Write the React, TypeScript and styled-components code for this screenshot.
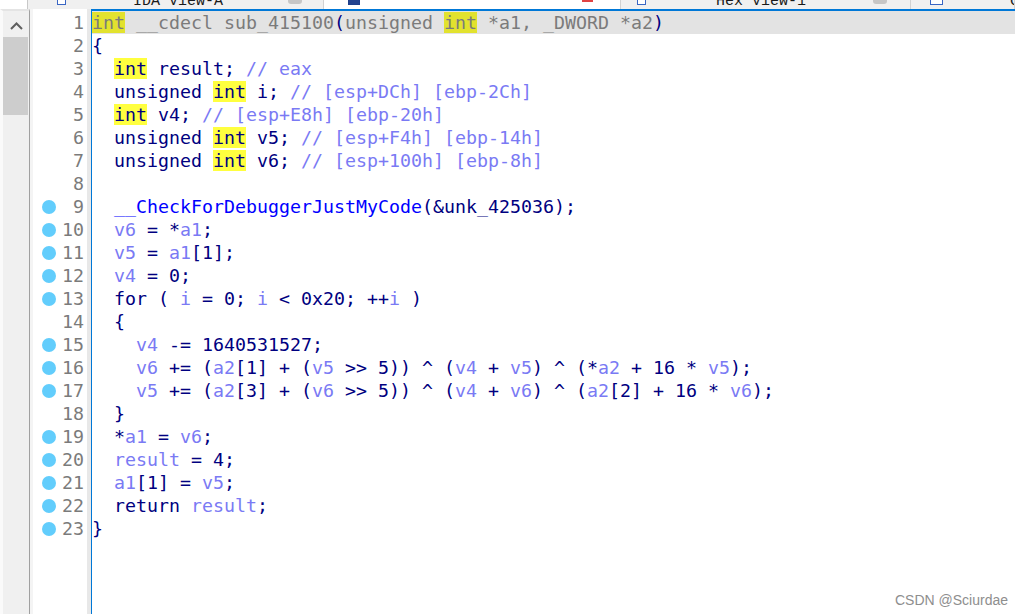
import React from 'react';
import styled, { createGlobalStyle } from 'styled-components';

const GlobalStyle = createGlobalStyle`
  html, body {
    margin: 0;
    padding: 0;
    background: #fff;
  }
  body {
    overflow: hidden;
  }
`;

const MONO = `"DejaVu Sans Mono", "Liberation Mono", monospace`;

type Kind = 'plain' | 'var' | 'kw' | 'func' | 'comment' | 'dim';

const VARS = new Set(['v4', 'v5', 'v6', 'a1', 'a2', 'i', 'result']);
const FUNCS = new Set(['__CheckForDebuggerJustMyCode']);

interface SourceLine {
  text: string;
  decl?: boolean;
  bp?: boolean;
}

const SOURCE: SourceLine[] = [
  { text: 'int __cdecl sub_415100(unsigned int *a1, _DWORD *a2)' },
  { text: '{' },
  { text: '  int result; // eax', decl: true },
  { text: '  unsigned int i; // [esp+DCh] [ebp-2Ch]', decl: true },
  { text: '  int v4; // [esp+E8h] [ebp-20h]', decl: true },
  { text: '  unsigned int v5; // [esp+F4h] [ebp-14h]', decl: true },
  { text: '  unsigned int v6; // [esp+100h] [ebp-8h]', decl: true },
  { text: '' },
  { text: '  __CheckForDebuggerJustMyCode(&unk_425036);', bp: true },
  { text: '  v6 = *a1;', bp: true },
  { text: '  v5 = a1[1];', bp: true },
  { text: '  v4 = 0;', bp: true },
  { text: '  for ( i = 0; i < 0x20; ++i )', bp: true },
  { text: '  {' },
  { text: '    v4 -= 1640531527;', bp: true },
  { text: '    v6 += (a2[1] + (v5 >> 5)) ^ (v4 + v5) ^ (*a2 + 16 * v5);', bp: true },
  { text: '    v5 += (a2[3] + (v6 >> 5)) ^ (v4 + v6) ^ (a2[2] + 16 * v6);', bp: true },
  { text: '  }' },
  { text: '  *a1 = v6;', bp: true },
  { text: '  result = 4;', bp: true },
  { text: '  a1[1] = v5;', bp: true },
  { text: '  return result;', bp: true },
  { text: '}', bp: true },
];

// split a line into coloured pieces, IDA pseudocode style
function tokenize(src: string, decl: boolean, current: boolean) {
  const parts = src.split(/(\/\/.*$|[A-Za-z_]\w*|[()])/);
  const out: { kind: Kind; text: string }[] = [];
  parts.forEach((part) => {
    if (!part) return;
    let kind: Kind = 'plain';
    if (part.startsWith('//')) kind = 'comment';
    else if (part === 'int') kind = 'kw';
    else if (FUNCS.has(part)) kind = 'func';
    else if (VARS.has(part) && !decl) kind = 'var';
    if (current && kind !== 'kw' && part !== '(' && part !== ')') kind = 'dim';
    out.push({ kind, text: part });
  });
  return out;
}

const Window = styled.div`
  position: relative;
  width: 1015px;
  height: 614px;
  display: flex;
  flex-direction: column;
  overflow: hidden;
  background: #fff;
`;

const TabStrip = styled.div`
  display: flex;
  height: 9px;
  flex-shrink: 0;
  overflow: hidden;
  background: #f0f0f0;
`;

const Corner = styled.div`
  flex: 0 0 28px;
  box-sizing: border-box;
  background: #fff;
  border-right: 1px solid #c8c8c8;
`;

const Tab = styled.div<{ $width?: number; $active?: boolean; $leftBorder?: boolean; $pad: number }>`
  display: flex;
  align-items: flex-start;
  flex: ${(p) => (p.$width ? `0 0 ${p.$width}px` : '1 1 auto')};
  box-sizing: border-box;
  height: 9px;
  overflow: hidden;
  padding-left: ${(p) => p.$pad}px;
  background: ${(p) => (p.$active ? '#fff' : '#f0f0f0')};
  border-right: ${(p) => (p.$active ? 'none' : '1px solid #d2d2d2')};
  border-left: ${(p) => (p.$leftBorder ? '1px solid #d2d2d2' : 'none')};
`;

const TabIcon = styled.div<{ $filled?: boolean; $w: number }>`
  flex-shrink: 0;
  width: ${(p) => p.$w}px;
  height: 11px;
  margin-top: -6px;
  box-sizing: border-box;
  border: 1px solid ${(p) => (p.$filled ? '#1f3f8c' : '#3a66c4')};
  background: ${(p) => (p.$filled ? '#23438f' : '#fff')};
`;

const TabLabel = styled.span<{ $offset: number }>`
  flex-shrink: 0;
  margin-left: ${(p) => p.$offset}px;
  margin-top: -6px;
  height: 15px;
  font-family: "Liberation Mono", monospace;
  font-size: 15px;
  line-height: 15px;
  color: #1a1a1a;
  white-space: pre;
`;

const TabClose = styled.div<{ $right: number }>`
  flex-shrink: 0;
  width: 14px;
  height: 12px;
  margin-left: auto;
  margin-right: ${(p) => p.$right}px;
  margin-top: -8px;
  border-radius: 3px;
  background: #c6c6c6;
`;

const ActiveMark = styled.div`
  flex-shrink: 0;
  width: 11px;
  height: 2px;
  margin-left: auto;
  margin-right: 27px;
  background: #e04343;
`;

const Body = styled.div`
  display: flex;
  flex: 1;
  min-height: 0;
`;

const ScrollBar = styled.div`
  flex: 0 0 30px;
  box-sizing: border-box;
  display: flex;
  flex-direction: column;
  border-left: 3px solid #fafafa;
  border-right: 1px solid #a0a0a0;
  border-top: 2px solid #e4e4e4;
  background: #f0f0f0;
`;

const ScrollButton = styled.div`
  height: 26px;
  display: flex;
  align-items: center;
  justify-content: center;
  padding-top: 4px;
  box-sizing: border-box;
`;

const ScrollThumb = styled.div`
  height: 78px;
  margin-right: 1px;
  background: #cdcdcd;
`;

const Gutter = styled.div`
  flex: 0 0 61px;
  box-sizing: border-box;
  padding-top: 2px;
  border-left: 3px solid #f4f4f4;
  border-right: 4px solid #e8e8e8;
  background: #fff;
`;

const GutterRow = styled.div`
  display: flex;
  align-items: center;
  height: 23px;
  padding-left: 9px;
  padding-right: 3px;
`;

const BreakDot = styled.span<{ $on?: boolean }>`
  flex-shrink: 0;
  width: 14px;
  height: 14px;
  border-radius: 50%;
  background: ${(p) => (p.$on ? '#62cdfc' : 'transparent')};
`;

const LineNo = styled.span`
  flex: 1;
  text-align: right;
  font-family: ${MONO};
  font-size: 18.27px;
  line-height: 23px;
  color: #7b7b7b;
`;

const Editor = styled.div`
  flex: 1;
  min-width: 0;
  border-left: 1px solid #0078d7;
  border-top: 2px solid #0078d7;
`;

const CodeLine = styled.div<{ $current?: boolean }>`
  height: 23px;
  line-height: 23px;
  white-space: pre;
  font-family: ${MONO};
  font-size: 18.27px;
  color: #000080;
  background: ${(p) => (p.$current ? '#e3e3e3' : 'transparent')};
`;

const Token = styled.span<{ $kind: Kind; $current?: boolean }>`
  color: ${(p) =>
    ({
      plain: '#000080',
      var: '#7a7af4',
      comment: '#7a7af4',
      func: '#0000ff',
      kw: p.$current ? '#7b7b7b' : '#000080',
      dim: '#7b7b7b',
    })[p.$kind]};
  background: ${(p) => (p.$kind === 'kw' ? (p.$current ? '#e2e22e' : '#ffff3f') : 'transparent')};
`;

const Watermark = styled.div`
  position: absolute;
  right: 7px;
  bottom: 6px;
  font-family: "Liberation Sans", Arial, sans-serif;
  font-size: 14px;
  line-height: 16px;
  color: #8e8e8e;
`;

const App: React.FC = () => {
  return (
    <Window>
      <GlobalStyle />
      <TabStrip>
        <Corner />
        <Tab $width={296} $pad={29}>
          <TabIcon $w={9} />
          <TabLabel $offset={67}>IDA View-A</TabLabel>
          <TabClose $right={21} />
        </Tab>
        <Tab $width={296} $pad={24} $active>
          <TabIcon $w={12} $filled />
          <ActiveMark />
        </Tab>
        <Tab $width={291} $pad={16} $leftBorder>
          <TabIcon $w={9} />
          <TabLabel $offset={70}>Hex View-1</TabLabel>
          <TabClose $right={23} />
        </Tab>
        <Tab $pad={19}>
          <TabIcon $w={13} />
          <TabLabel $offset={67}>C</TabLabel>
        </Tab>
      </TabStrip>
      <Body>
        <ScrollBar>
          <ScrollButton>
            <svg width="13" height="8" viewBox="0 0 13 8">
              <path d="M1 7 L6.5 1.5 L12 7" fill="none" stroke="#5f5f5f" strokeWidth="2" />
            </svg>
          </ScrollButton>
          <ScrollThumb />
        </ScrollBar>
        <Gutter>
          {SOURCE.map((line, idx) => (
            <GutterRow key={idx}>
              <BreakDot $on={line.bp} />
              <LineNo>{idx + 1}</LineNo>
            </GutterRow>
          ))}
        </Gutter>
        <Editor>
          {SOURCE.map((line, idx) => {
            const current = idx === 0;
            return (
              <CodeLine key={idx} $current={current}>
                {tokenize(line.text, !!line.decl, current).map((t, i) => (
                  <Token key={i} $kind={t.kind} $current={current}>
                    {t.text}
                  </Token>
                ))}
                {line.text === '' ? ' ' : null}
              </CodeLine>
            );
          })}
        </Editor>
      </Body>
      <Watermark>CSDN @Sciurdae</Watermark>
    </Window>
  );
};

export default App;
